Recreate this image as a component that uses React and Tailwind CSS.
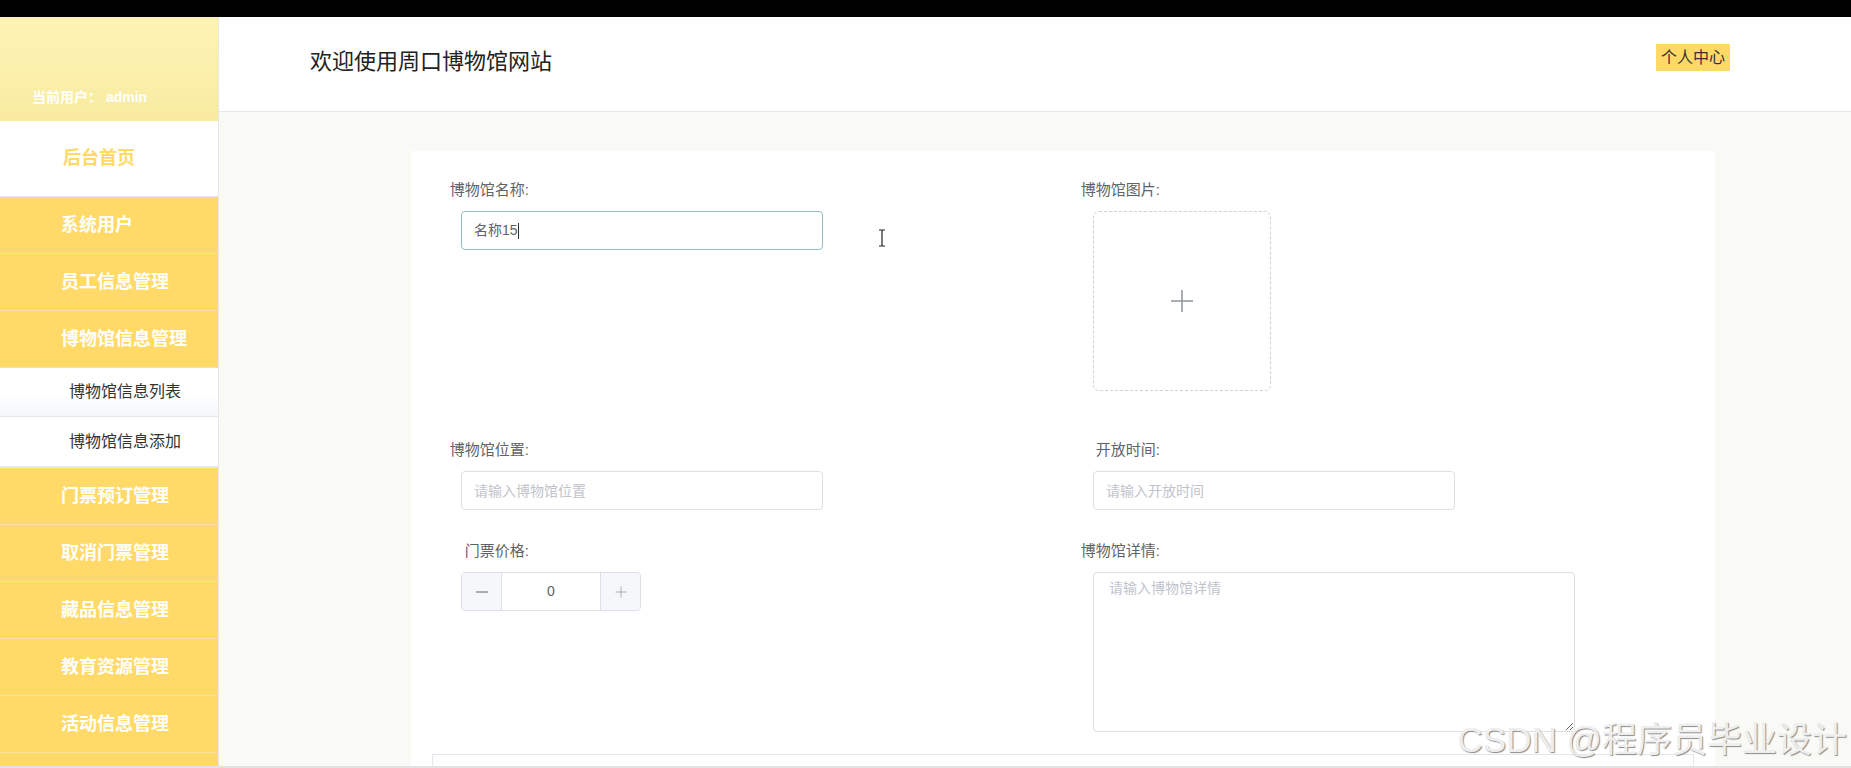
const menu = [
  { label: '系统用户' },
  { label: '员工信息管理' },
  { label: '博物馆信息管理', children: ['博物馆信息列表', '博物馆信息添加'] },
  { label: '门票预订管理' },
  { label: '取消门票管理' },
  { label: '藏品信息管理' },
  { label: '教育资源管理' },
  { label: '活动信息管理' },
  { label: '' },
]

function Sidebar() {
  return (
    <aside className="w-[219px] shrink-0 border-r border-[#e6e6e6] bg-white overflow-hidden flex flex-col">
      <div className="h-[104px] shrink-0 bg-linear-to-b from-[#fcf3b4] via-[#fbf0ac] to-[#f8eaa0] flex flex-col justify-end pb-[14px] pl-[32px]">
        <span className="text-[14px] leading-[20px] font-bold text-white">当前用户： admin</span>
      </div>
      <div className="h-[76px] shrink-0 border-b border-[#e4e7ed] flex items-center pl-[63px]">
        <span className="text-[18px] font-bold text-[#ffd966]">后台首页</span>
      </div>
      {menu.map((m, idx) => (
        <div key={idx}>
          <div className="h-[57px] bg-[#ffda69] border-b border-[#f6e3a6] flex items-center pl-[61px]">
            <span className="text-[18px] font-bold text-white">{m.label}</span>
          </div>
          {m.children && m.children.map((c, i) => (
            <div
              key={c}
              className={i === 0
                ? 'h-[49px] bg-linear-to-b from-white via-white to-[#f4f7fa] border-b border-[#e4e7ed] flex items-center pl-[69px]'
                : 'h-[51px] bg-white border-b-2 border-[#e4e7ed] flex items-center pl-[69px]'}
            >
              <span className="text-[16px] font-normal text-[#333]">{c}</span>
            </div>
          ))}
        </div>
      ))}
    </aside>
  )
}

function Label({ children }) {
  return (
    <div className="w-[80px] text-right text-[15px] leading-[20px] text-[#606266]">{children}</div>
  )
}

function PlusIcon({ size = 24, color = '#8c939d', width = 1.5 }) {
  return (
    <svg width={size} height={size} viewBox="0 0 24 24">
      <line x1="12" y1="1" x2="12" y2="23" stroke={color} strokeWidth={width} />
      <line x1="1" y1="12" x2="23" y2="12" stroke={color} strokeWidth={width} />
    </svg>
  )
}

function FormCard() {
  return (
    <div className="relative ml-[192px] mr-[136px] mt-[39px] flex-1 bg-white pt-[29px] pl-[38px] pr-[21px]">
      {/* row 1 */}
      <div className="grid grid-cols-[631px_631px]">
        <div>
          <Label>博物馆名称:</Label>
          <div className="ml-[12px] mt-[11px] w-[362px] h-[39px] rounded-[4px] border border-[#90bfc0] flex items-center pl-[12px] text-[14px] text-[#606266]">
            <span>名称15</span>
            <span className="w-px h-[16px] bg-[#333]" />
          </div>
        </div>
        <div>
          <Label>博物馆图片:</Label>
          <div className="ml-[13px] mt-[11px] w-[178px] h-[180px] rounded-[6px] border border-dashed border-[#d2d2d2] flex items-center justify-center">
            <PlusIcon />
          </div>
        </div>
      </div>

      {/* row 2 */}
      <div className="grid grid-cols-[631px_631px] mt-[49px]">
        <div>
          <Label>博物馆位置:</Label>
          <input
            placeholder="请输入博物馆位置"
            className="ml-[12px] mt-[11px] w-[362px] h-[39px] rounded-[4px] border border-[#dcdfe6] px-[12px] text-[14px] text-[#606266] placeholder:text-[#c0c4cc] outline-none"
          />
        </div>
        <div>
          <Label>开放时间:</Label>
          <input
            placeholder="请输入开放时间"
            className="ml-[13px] mt-[11px] w-[362px] h-[39px] rounded-[4px] border border-[#dcdfe6] px-[12px] text-[14px] text-[#606266] placeholder:text-[#c0c4cc] outline-none"
          />
        </div>
      </div>

      {/* row 3 */}
      <div className="grid grid-cols-[631px_631px] mt-[31px]">
        <div>
          <Label>门票价格:</Label>
          <div className="ml-[12px] mt-[11px] w-[180px] h-[39px] rounded-[4px] border border-[#dcdfe6] flex overflow-hidden">
            <div className="w-[40px] bg-[#f5f7fa] border-r border-[#dcdfe6] flex items-center justify-center">
              <svg width="12" height="12" viewBox="0 0 12 12">
                <line x1="0" y1="6" x2="12" y2="6" stroke="#606266" strokeWidth="1" />
              </svg>
            </div>
            <div className="flex-1 flex items-center justify-center text-[14px] text-[#606266]">0</div>
            <div className="w-[40px] bg-[#f5f7fa] border-l border-[#dcdfe6] flex items-center justify-center">
              <PlusIcon size={12} color="#606266" width={1} />
            </div>
          </div>
        </div>
        <div>
          <Label>博物馆详情:</Label>
          <textarea
            placeholder="请输入博物馆详情"
            className="block ml-[13px] mt-[11px] w-[482px] h-[160px] rounded-[4px] border border-[#dcdfe6] px-[15px] py-[5px] text-[14px] leading-[21px] text-[#606266] placeholder:text-[#c0c4cc] outline-none"
          />
        </div>
      </div>

      {/* next item, cut off by the window */}
      <div className="mt-[22px] -ml-[17px] h-[120px] border border-[#e4e7ed]" />

      {/* mouse I-beam */}
      <svg className="absolute left-[467px] top-[78px]" width="8" height="18" viewBox="0 0 8 18">
        <path d="M1 1h6M4 1v16M1 17h6" stroke="#222" strokeWidth="1.2" fill="none" />
      </svg>
    </div>
  )
}

export default function App() {
  return (
    <div className="relative h-[768px] w-full overflow-hidden flex flex-col bg-[#f9faf5] font-['Liberation_Sans','Noto_Sans_CJK_SC',sans-serif]">
      <div className="h-[17px] shrink-0 bg-black" />
      <div className="flex flex-1 min-h-0">
        <Sidebar />
        <main className="flex-1 min-w-0 flex flex-col overflow-hidden">
          <header className="h-[95px] shrink-0 bg-white border-b border-[#e4e7ed] flex items-start justify-between pl-[91px] pr-[121px]">
            <h1 className="mt-[30px] text-[22px] leading-[30px] text-[#222]">欢迎使用周口博物馆网站</h1>
            <button className="mt-[27px] h-[27px] px-[5px] bg-[#ffd966] text-[16px] leading-[27px] text-[#333]">个人中心</button>
          </header>
          <FormCard />
        </main>
      </div>
      <div className="h-[2px] shrink-0 bg-[#e2e2e2]" />
      <div className="absolute right-[4px] bottom-[8px] text-[35px] leading-[40px] text-[#eeeeee] [text-shadow:1px_1px_1px_#8a8a8a] pointer-events-none">
        CSDN @程序员毕业设计
      </div>
    </div>
  )
}
